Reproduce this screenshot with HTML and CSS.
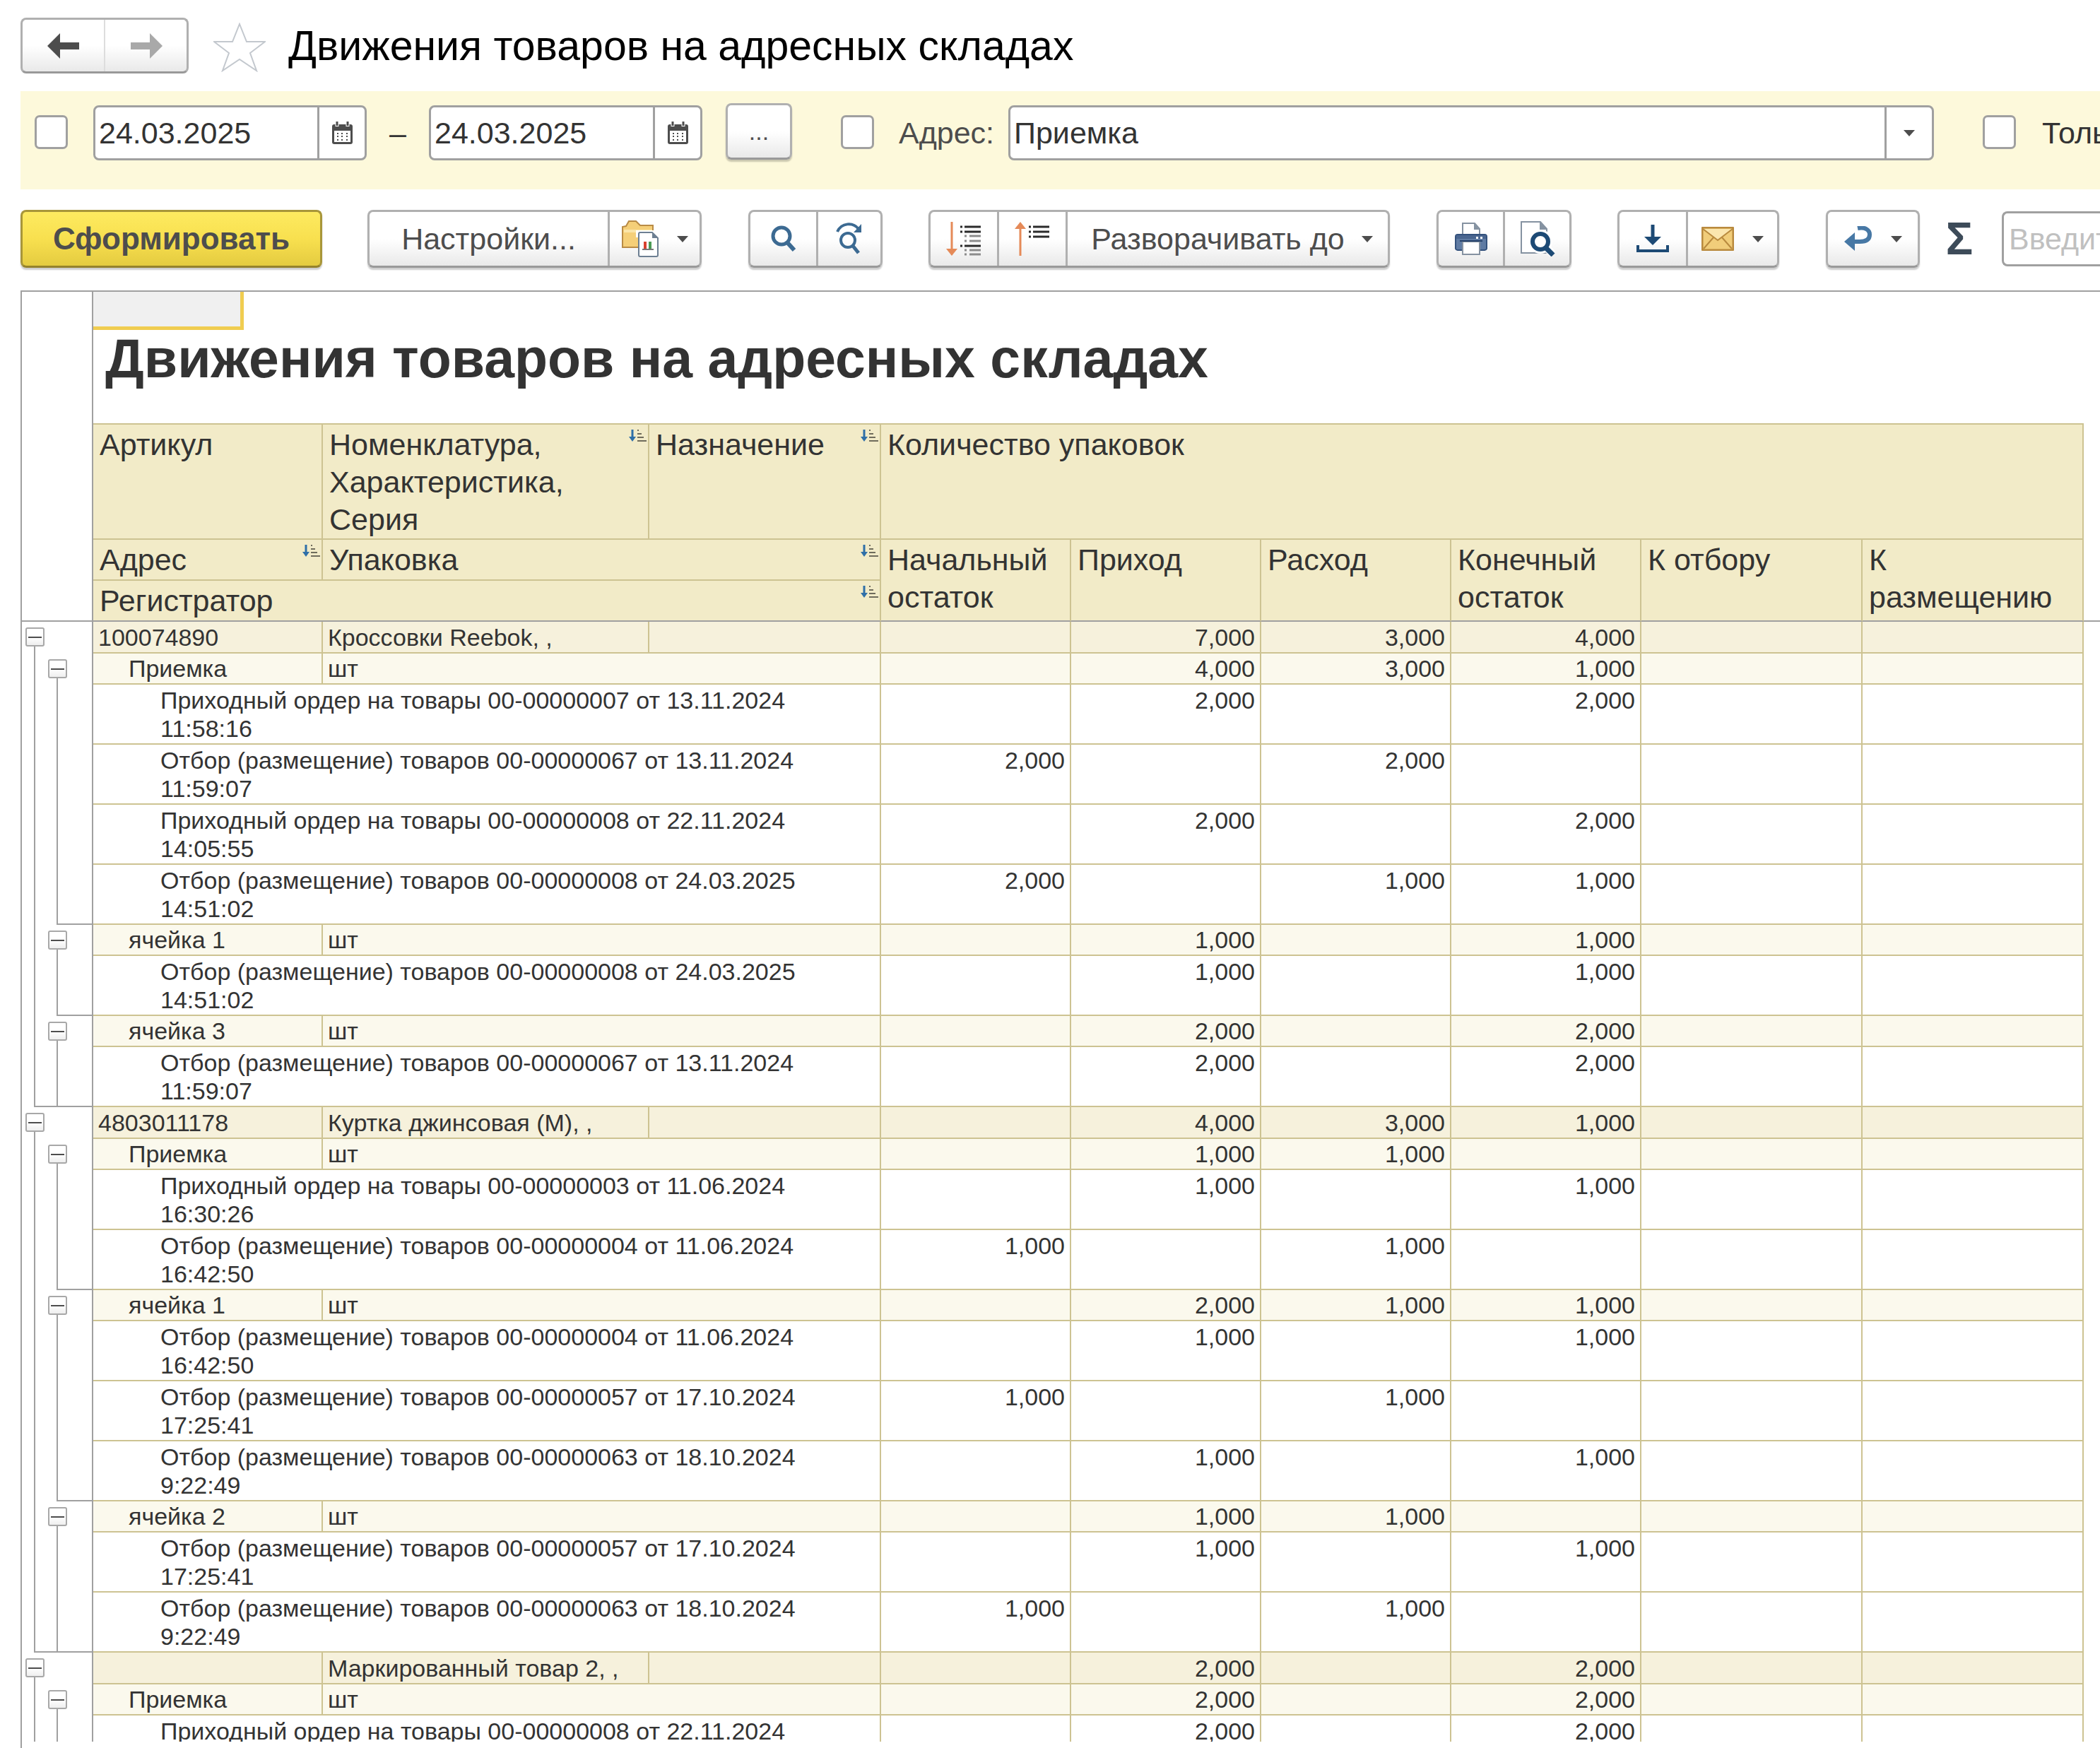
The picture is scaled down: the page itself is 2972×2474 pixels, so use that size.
FILE: index.html
```html
<!DOCTYPE html>
<html lang="ru">
<head>
    <meta charset="UTF-8">
    <meta name="viewport" content="width=device-width, initial-scale=1.0">
    <title>Движения товаров на адресных складах</title>
    <link rel="stylesheet" href="styles.css">
</head>
<body>

<!-- Shared icons -->
<svg class="sprite" width="0" height="0" aria-hidden="true">
    <symbol id="calendar" viewBox="0 0 29 32">
        <path d="M3 4h23a3 3 0 0 1 3 3v22a3 3 0 0 1-3 3H3a3 3 0 0 1-3-3V7a3 3 0 0 1 3-3z" fill="#4d4d4d"/>
        <path d="M3 13h23v16H3z" fill="#fff"/>
        <path d="M7 0v7M22 0v7" stroke="#fff" stroke-width="5"/>
        <path d="M7 0v6M22 0v6" stroke="#4d4d4d" stroke-width="3"/>
        <path d="M7 16h2v2H7zM13 16h2v2h-2zM20 16h2v2h-2zM7 20h2v2H7zM13 20h2v2h-2zM20 20h2v2h-2zM7 25h2v2H7zM13 25h2v2h-2zM20 25h2v2h-2z" fill="#4d4d4d"/>
    </symbol>
    <symbol id="caret" viewBox="0 0 16 9">
        <path d="M0 0h16L8 9z" fill="#4d4d4d"/>
    </symbol>
    <symbol id="sort" viewBox="0 0 25 18">
        <path d="M5 1v12" stroke="#2f6fa8" stroke-width="3"/>
        <path d="M0 11h10L5 18z" fill="#2f6fa8"/>
        <path d="M12 2h2M12 7h6M12 12h9M12 17h13" stroke="#6f6c5c" stroke-width="2"/>
    </symbol>
</svg>

<header class="title-bar">
    <div class="btn-group nav-buttons">
        <button type="button" aria-label="Назад">
            <svg width="46" height="36" viewBox="0 0 46 36"><path d="M0 18L18 0v13h27v10H18v13z" fill="#4d4d4d"/></svg>
        </button>
        <button type="button" aria-label="Вперед">
            <svg width="46" height="36" viewBox="0 0 46 36"><path d="M46 18L28 0v13H1v10h27v13z" fill="#a9a9a9"/></svg>
        </button>
    </div>
    <svg class="star" width="74" height="70" viewBox="0 0 74 70">
        <path d="M37 2l10 25h26L52 43l9 25-24-16-24 16 9-25L1 27h26z" fill="#fff" stroke="#c3c8ce" stroke-width="2"/>
    </svg>
    <h1>Движения товаров на адресных складах</h1>
</header>

<section class="filters">
    <input type="checkbox" class="check" aria-label="Период">
    <div class="field date-field">
        <input type="text" value="24.03.2025" aria-label="Начало периода">
        <button type="button" aria-label="Выбрать дату"><svg width="29" height="32"><use href="#calendar"/></svg></button>
    </div>
    <span class="dash">–</span>
    <div class="field date-field">
        <input type="text" value="24.03.2025" aria-label="Конец периода">
        <button type="button" aria-label="Выбрать дату"><svg width="29" height="32"><use href="#calendar"/></svg></button>
    </div>
    <button type="button" class="btn more-btn">...</button>
    <input type="checkbox" class="check address-check" aria-label="Отбор по адресу">
    <label for="address" class="address-label">Адрес:</label>
    <div class="field address-field">
        <select id="address">
            <option>Приемка</option>
        </select>
        <span class="drop"><svg width="16" height="9"><use href="#caret"/></svg></span>
    </div>
    <input type="checkbox" class="check only-check" id="only">
    <label for="only" class="only-label">Только</label>
</section>

<div class="toolbar">
    <button type="button" class="btn primary">Сформировать</button>

    <div class="btn-group settings">
        <button type="button" class="settings-btn">Настройки...</button>
        <button type="button" class="with-caret" aria-label="Варианты отчета">
            <svg width="52" height="52" viewBox="0 0 52 52">
                <path d="M1 38V9l5-1 4-7h10l6 6h18v31z" fill="#f5cf78" stroke="#b98b45" stroke-width="2"/>
                <path d="M3 15h40" stroke="#fbe5a8" stroke-width="4"/>
                <path d="M20 14h26v10H20z" fill="#fff"/>
                <path d="M26 17h17l8 8v24a2 2 0 0 1-2 2H26a2 2 0 0 1-2-2V19a2 2 0 0 1 2-2z" fill="#fff" stroke="#6d7f92" stroke-width="2"/>
                <path d="M43 17v8h8z" fill="#6d7f92"/>
                <path d="M33 30v10" stroke="#d8412f" stroke-width="4"/>
                <path d="M40 30v10" stroke="#4a9a54" stroke-width="4"/>
                <path d="M29 41h16" stroke="#777" stroke-width="2"/>
            </svg>
            <svg width="16" height="9"><use href="#caret"/></svg>
        </button>
    </div>

    <div class="btn-group search">
        <button type="button" aria-label="Найти">
            <svg width="36" height="38" viewBox="0 0 36 38">
                <circle cx="15" cy="15" r="12" fill="none" stroke="#3c6a92" stroke-width="5"/>
                <path d="M23 24l10 11" stroke="#3c6a92" stroke-width="6"/>
            </svg>
        </button>
        <button type="button" aria-label="Найти далее">
            <svg width="38" height="46" viewBox="0 0 38 46">
                <path d="M2 13C8 0 24-1 32 9" fill="none" stroke="#3c6a92" stroke-width="4"/>
                <path d="M36 2v12H25z" fill="#3c6a92"/>
                <circle cx="17" cy="25" r="10" fill="none" stroke="#3c6a92" stroke-width="4"/>
                <path d="M24 33l8 10" stroke="#3c6a92" stroke-width="5"/>
            </svg>
        </button>
    </div>

    <div class="btn-group expand">
        <button type="button" aria-label="Развернуть все">
            <svg width="50" height="48" viewBox="0 0 50 48">
                <path d="M8 0v40" stroke="#e58a58" stroke-width="3"/>
                <path d="M0 38h16L8 48z" fill="#e58a58"/>
                <path d="M20 7h3M26 7h23M20 14h3M26 14h23M20 34h3M26 34h23" stroke="#2b2b2b" stroke-width="3"/>
                <path d="M26 20h3M33 20h16M26 27h3M33 27h16M26 40h3M33 40h16M26 46h3M33 46h16" stroke="#8c8c8c" stroke-width="3"/>
            </svg>
        </button>
        <button type="button" aria-label="Свернуть все">
            <svg width="50" height="48" viewBox="0 0 50 48">
                <path d="M8 8v40" stroke="#e58a58" stroke-width="3"/>
                <path d="M0 10h16L8 0z" fill="#e58a58"/>
                <path d="M20 7h3M26 7h23M20 14h3M26 14h23M20 21h3M26 21h23" stroke="#2b2b2b" stroke-width="3"/>
            </svg>
        </button>
        <button type="button" class="expand-to">Разворачивать до <svg width="16" height="9"><use href="#caret"/></svg></button>
    </div>

    <div class="btn-group print">
        <button type="button" aria-label="Печать">
            <svg width="46" height="46" viewBox="0 0 46 46">
                <path d="M11 20V1h17l7 8v11" fill="#fff" stroke="#8592a1" stroke-width="2"/>
                <path d="M27 1v9h8z" fill="#8592a1"/>
                <path d="M4 17h38a3 3 0 0 1 3 3v17a3 3 0 0 1-3 2H4a3 3 0 0 1-3-2V20a3 3 0 0 1 3-3z" fill="#5f7ba3" stroke="#34527d" stroke-width="2"/>
                <path d="M2 18h42v5H2z" fill="#4a6690"/>
                <path d="M30 20h3v3h-3zM36 20h3v3h-3z" fill="#fff"/>
                <path d="M11 27h24v18H11z" fill="#fff" stroke="#8592a1" stroke-width="2"/>
                <path d="M7 26h32" stroke="#27426b" stroke-width="2"/>
            </svg>
        </button>
        <button type="button" aria-label="Предварительный просмотр">
            <svg width="50" height="50" viewBox="0 0 50 50">
                <path d="M2 1h27l9 10v34H2z" fill="#fff" stroke="#8592a1" stroke-width="2"/>
                <path d="M28 1v11h11z" fill="#8592a1"/>
                <circle cx="29" cy="29" r="13" fill="#fff" stroke="#fff" stroke-width="8"/>
                <path d="M36 36l11 11" stroke="#fff" stroke-width="11"/>
                <circle cx="29" cy="29" r="11" fill="#fff" stroke="#1d4a75" stroke-width="6"/>
                <path d="M37 38l10 10" stroke="#1d4a75" stroke-width="7"/>
            </svg>
        </button>
    </div>

    <div class="btn-group save">
        <button type="button" aria-label="Сохранить">
            <svg width="46" height="40" viewBox="0 0 46 40">
                <path d="M23 0v20" stroke="#1d4a75" stroke-width="5"/>
                <path d="M11 17h24L23 29z" fill="#1d4a75"/>
                <path d="M2 29v8h42v-8" fill="none" stroke="#1d4a75" stroke-width="4"/>
            </svg>
        </button>
        <button type="button" class="with-caret" aria-label="Отправить по почте">
            <svg width="46" height="34" viewBox="0 0 46 34">
                <rect x="1" y="1" width="44" height="32" rx="2" fill="#f1cd7a" stroke="#b98a3e" stroke-width="3"/>
                <path d="M3 3h40L23 19z" fill="#fbe6ae"/>
                <path d="M2 3l21 16L44 3M3 31l14-16M43 31L29 15" fill="none" stroke="#b98a3e" stroke-width="2"/>
            </svg>
            <svg width="16" height="9"><use href="#caret"/></svg>
        </button>
    </div>

    <div class="btn-group back">
        <button type="button" class="with-caret" aria-label="Вернуться">
            <svg width="40" height="36" viewBox="0 0 40 36">
                <path d="M19 3c10-2 17 2 17 9s-5 10-14 10h-9" fill="none" stroke="#4778a5" stroke-width="6"/>
                <path d="M0 22L15 9v26z" fill="#4778a5"/>
            </svg>
            <svg width="16" height="9"><use href="#caret"/></svg>
        </button>
    </div>

    <button type="button" class="sum-btn" aria-label="Сумма">Σ</button>
    <input type="text" class="find-input" placeholder="Введите" aria-label="Поиск">
</div>

<main class="report">
<div class="sheet">
<table>
    <colgroup>
        <col class="c-tree"><col class="c-code"><col class="c-item"><col class="c-purpose">
        <col class="c-num"><col class="c-num"><col class="c-num"><col class="c-num">
        <col class="c-pick"><col class="c-pick"><col>
    </colgroup>
    <thead>
        <tr class="caption">
            <td class="tree"></td>
            <td colspan="9">
                <div class="active-cell"></div>
                <h2>Движения товаров на адресных складах</h2>
            </td>
            <td class="rest"></td>
        </tr>
        <tr>
            <td class="tree freeze" rowspan="3"></td>
            <th>Артикул</th>
            <th><svg class="sort" width="25" height="18"><use href="#sort"/></svg>Номенклатура,<br>Характеристика,<br>Серия</th>
            <th><svg class="sort" width="25" height="18"><use href="#sort"/></svg>Назначение</th>
            <th colspan="6">Количество упаковок</th>
            <td class="rest freeze" rowspan="3"></td>
        </tr>
        <tr>
            <th><svg class="sort" width="25" height="18"><use href="#sort"/></svg>Адрес</th>
            <th colspan="2"><svg class="sort" width="25" height="18"><use href="#sort"/></svg>Упаковка</th>
            <th class="freeze" rowspan="2">Начальный остаток</th>
            <th class="freeze" rowspan="2">Приход</th>
            <th class="freeze" rowspan="2">Расход</th>
            <th class="freeze" rowspan="2">Конечный остаток</th>
            <th class="freeze" rowspan="2">К отбору</th>
            <th class="freeze" rowspan="2">К<br>размещению</th>
        </tr>
        <tr>
            <th class="freeze" colspan="3"><svg class="sort" width="25" height="18"><use href="#sort"/></svg>Регистратор</th>
        </tr>
    </thead>
    <tbody>
        <!-- Кроссовки Reebok -->
        <tr class="group"><td class="tree"><button type="button" class="toggle" aria-label="Свернуть"></button></td><td>100074890</td><td>Кроссовки Reebok, ,</td><td></td><td></td><td>7,000</td><td>3,000</td><td>4,000</td><td></td><td></td></tr>
        <tr class="sub"><td class="tree"><button type="button" class="toggle" aria-label="Свернуть"></button></td><td>Приемка</td><td colspan="2">шт</td><td></td><td>4,000</td><td>3,000</td><td>1,000</td><td></td><td></td></tr>
        <tr class="doc"><td class="tree"></td><td colspan="3">Приходный ордер на товары 00-00000007 от 13.11.2024<br>11:58:16</td><td></td><td>2,000</td><td></td><td>2,000</td><td></td><td></td></tr>
        <tr class="doc"><td class="tree"></td><td colspan="3">Отбор (размещение) товаров 00-00000067 от 13.11.2024<br>11:59:07</td><td>2,000</td><td></td><td>2,000</td><td></td><td></td><td></td></tr>
        <tr class="doc"><td class="tree"></td><td colspan="3">Приходный ордер на товары 00-00000008 от 22.11.2024<br>14:05:55</td><td></td><td>2,000</td><td></td><td>2,000</td><td></td><td></td></tr>
        <tr class="doc last"><td class="tree"></td><td colspan="3">Отбор (размещение) товаров 00-00000008 от 24.03.2025<br>14:51:02</td><td>2,000</td><td></td><td>1,000</td><td>1,000</td><td></td><td></td></tr>
        <tr class="sub"><td class="tree"><button type="button" class="toggle" aria-label="Свернуть"></button></td><td>ячейка 1</td><td colspan="2">шт</td><td></td><td>1,000</td><td></td><td>1,000</td><td></td><td></td></tr>
        <tr class="doc last"><td class="tree"></td><td colspan="3">Отбор (размещение) товаров 00-00000008 от 24.03.2025<br>14:51:02</td><td></td><td>1,000</td><td></td><td>1,000</td><td></td><td></td></tr>
        <tr class="sub"><td class="tree"><button type="button" class="toggle" aria-label="Свернуть"></button></td><td>ячейка 3</td><td colspan="2">шт</td><td></td><td>2,000</td><td></td><td>2,000</td><td></td><td></td></tr>
        <tr class="doc last-all"><td class="tree"></td><td colspan="3">Отбор (размещение) товаров 00-00000067 от 13.11.2024<br>11:59:07</td><td></td><td>2,000</td><td></td><td>2,000</td><td></td><td></td></tr>

        <!-- Куртка джинсовая -->
        <tr class="group"><td class="tree"><button type="button" class="toggle" aria-label="Свернуть"></button></td><td>4803011178</td><td>Куртка джинсовая (M), ,</td><td></td><td></td><td>4,000</td><td>3,000</td><td>1,000</td><td></td><td></td></tr>
        <tr class="sub"><td class="tree"><button type="button" class="toggle" aria-label="Свернуть"></button></td><td>Приемка</td><td colspan="2">шт</td><td></td><td>1,000</td><td>1,000</td><td></td><td></td><td></td></tr>
        <tr class="doc"><td class="tree"></td><td colspan="3">Приходный ордер на товары 00-00000003 от 11.06.2024<br>16:30:26</td><td></td><td>1,000</td><td></td><td>1,000</td><td></td><td></td></tr>
        <tr class="doc last"><td class="tree"></td><td colspan="3">Отбор (размещение) товаров 00-00000004 от 11.06.2024<br>16:42:50</td><td>1,000</td><td></td><td>1,000</td><td></td><td></td><td></td></tr>
        <tr class="sub"><td class="tree"><button type="button" class="toggle" aria-label="Свернуть"></button></td><td>ячейка 1</td><td colspan="2">шт</td><td></td><td>2,000</td><td>1,000</td><td>1,000</td><td></td><td></td></tr>
        <tr class="doc"><td class="tree"></td><td colspan="3">Отбор (размещение) товаров 00-00000004 от 11.06.2024<br>16:42:50</td><td></td><td>1,000</td><td></td><td>1,000</td><td></td><td></td></tr>
        <tr class="doc"><td class="tree"></td><td colspan="3">Отбор (размещение) товаров 00-00000057 от 17.10.2024<br>17:25:41</td><td>1,000</td><td></td><td>1,000</td><td></td><td></td><td></td></tr>
        <tr class="doc last"><td class="tree"></td><td colspan="3">Отбор (размещение) товаров 00-00000063 от 18.10.2024<br>9:22:49</td><td></td><td>1,000</td><td></td><td>1,000</td><td></td><td></td></tr>
        <tr class="sub"><td class="tree"><button type="button" class="toggle" aria-label="Свернуть"></button></td><td>ячейка 2</td><td colspan="2">шт</td><td></td><td>1,000</td><td>1,000</td><td></td><td></td><td></td></tr>
        <tr class="doc"><td class="tree"></td><td colspan="3">Отбор (размещение) товаров 00-00000057 от 17.10.2024<br>17:25:41</td><td></td><td>1,000</td><td></td><td>1,000</td><td></td><td></td></tr>
        <tr class="doc last-all"><td class="tree"></td><td colspan="3">Отбор (размещение) товаров 00-00000063 от 18.10.2024<br>9:22:49</td><td>1,000</td><td></td><td>1,000</td><td></td><td></td><td></td></tr>

        <!-- Маркированный товар -->
        <tr class="group"><td class="tree"><button type="button" class="toggle" aria-label="Свернуть"></button></td><td></td><td>Маркированный товар 2, ,</td><td></td><td></td><td>2,000</td><td></td><td>2,000</td><td></td><td></td></tr>
        <tr class="sub"><td class="tree"><button type="button" class="toggle" aria-label="Свернуть"></button></td><td>Приемка</td><td colspan="2">шт</td><td></td><td>2,000</td><td></td><td>2,000</td><td></td><td></td></tr>
        <tr class="doc"><td class="tree"></td><td colspan="3">Приходный ордер на товары 00-00000008 от 22.11.2024</td><td></td><td>2,000</td><td></td><td>2,000</td><td></td><td></td></tr>
    </tbody>
</table>
</div>
</main>

</body>
</html>
```
FILE: styles.css
```css
* {
    box-sizing: border-box;
}

body {
    font-family: "Liberation Sans", Arial, sans-serif;
    font-size: 43px;
    color: #333;
    margin: 0;
    padding: 25px 0 0 29px;
    height: 100vh;
    overflow: hidden;
    background: #fff;
    display: flex;
    flex-direction: column;
}

button, input, select {
    font: inherit;
    color: inherit;
    margin: 0;
    padding: 0;
}

button {
    cursor: pointer;
}

svg {
    display: block;
    flex: none;
}

.sprite {
    position: absolute;
}

/* Title */
.title-bar {
    display: flex;
    align-items: center;
    height: 79px;
    margin-bottom: 25px;
    flex: none;
}

.title-bar h1 {
    margin: 0;
    font-size: 59px;
    font-weight: normal;
    color: #000;
    white-space: nowrap;
}

.star {
    margin: 4px 32px 0 35px;
}

/* Buttons */
.btn,
.btn-group {
    height: 82px;
    border: 3px solid #b0b0b0;
    border-bottom-color: #999;
    border-radius: 8px;
    background: linear-gradient(#fff 50%, #e9e9e9);
    box-shadow: 0 3px 2px rgba(0, 0, 0, 0.2);
    color: #4d4d4d;
    flex: none;
}

.btn-group {
    display: flex;
}

.btn-group button {
    flex: 1;
    border: none;
    background: none;
    display: flex;
    align-items: center;
    justify-content: center;
    white-space: nowrap;
}

.btn-group button + button {
    border-left: 3px solid #b0b0b0;
}

.btn-group .with-caret {
    gap: 26px;
}

.nav-buttons {
    width: 238px;
    height: 79px;
    box-shadow: none;
}

.nav-buttons button + button {
    border-left: 2px solid #ddd;
}

/* Filters */
.filters {
    display: flex;
    align-items: flex-start;
    height: 139px;
    padding: 20px 0 0 20px;
    background: #fdf9db;
    margin-bottom: 29px;
    overflow: hidden;
    flex: none;
}

.check {
    appearance: none;
    width: 47px;
    height: 48px;
    margin-top: 14px;
    border: 3px solid #a0a0a0;
    border-radius: 7px;
    background: #fff;
    flex: none;
}

.field {
    display: flex;
    height: 78px;
    border: 3px solid #a0a0a0;
    border-radius: 8px;
    background: #fff;
    overflow: hidden;
}

.field input,
.field select {
    flex: 1;
    min-width: 0;
    appearance: none;
    border: none;
    background: none;
    padding-left: 5px;
}

.field button,
.field .drop {
    width: 67px;
    border: none;
    border-left: 3px solid #a0a0a0;
    background: none;
    display: flex;
    align-items: center;
    justify-content: center;
    flex: none;
}

.date-field {
    width: 387px;
    flex: none;
}

.check + .date-field {
    margin-left: 36px;
}

.dash {
    width: 88px;
    line-height: 78px;
    text-align: center;
    flex: none;
}

.more-btn {
    width: 94px;
    height: 80px;
    margin-top: -3px;
    margin-left: 33px;
    font-size: 34px;
}

.address-check {
    margin-left: 69px;
}

.address-label {
    margin-left: 35px;
    line-height: 78px;
    color: #4d4d4d;
}

.address-field {
    flex: 1;
    margin-left: 20px;
}

.only-check {
    margin-left: 69px;
}

.only-label {
    width: 82px;
    margin-left: 37px;
    line-height: 78px;
    overflow: hidden;
    flex: none;
}

/* Toolbar */
.toolbar {
    display: flex;
    align-items: center;
    height: 82px;
    margin-bottom: 32px;
    flex: none;
}

.primary {
    width: 427px;
    font-size: 44px;
    font-weight: bold;
    border-color: #a8963a;
    border-bottom-color: #94822c;
    background: linear-gradient(#fdea60, #f8e04f 50%, #e4cb40);
}

.settings {
    width: 473px;
    margin-left: 64px;
}

.settings .settings-btn {
    flex: none;
    width: 337px;
}

.search {
    width: 190px;
    margin-left: 66px;
}

.search button:first-child {
    flex: none;
    width: 93px;
}

.expand {
    width: 653px;
    margin-left: 65px;
}

.expand button {
    flex: none;
    width: 94px;
}

.expand button + button {
    width: 97px;
}

.expand .expand-to {
    flex: 1;
    gap: 24px;
    padding-left: 12px;
}

.print {
    width: 191px;
    margin-left: 66px;
}

.save {
    width: 229px;
    margin-left: 65px;
}

.save button:first-child {
    flex: none;
    width: 94px;
}

.back {
    width: 133px;
    margin-left: 66px;
}

.sum-btn {
    width: 60px;
    margin: 0 30px 0 26px;
    border: none;
    background: none;
    font-size: 64px;
    font-weight: bold;
    color: #3d4b59;
    flex: none;
}

/* runs off the right side of the toolbar */
.find-input {
    flex: 1;
    min-width: 0;
    height: 78px;
    padding-left: 7px;
    border: 3px solid #a0a0a0;
    border-right: none;
    border-radius: 8px 0 0 8px;
}

.find-input::placeholder {
    color: #c0c0c0;
}

/* Report */
.report {
    flex: 1;
    min-height: 0;
    display: flex;
    border-top: 2px solid #a0a0a0;
    border-left: 2px solid #a0a0a0;
    padding-bottom: 9px;
}

.sheet {
    flex: 1;
    overflow: hidden;
}

table {
    width: 100%;
    table-layout: fixed;
    border-collapse: separate;
    border-spacing: 0;
}

.c-tree { width: 101px; }
.c-code { width: 325px; }
.c-item { width: 462px; }
.c-purpose { width: 328px; }
.c-num { width: 269px; }
.c-pick { width: 313px; }

th, td {
    padding: 0;
    vertical-align: top;
    text-align: left;
    font-weight: normal;
    border-right: 2px solid #cdc392;
    border-bottom: 2px solid #cdc392;
}

th {
    height: 58px;
    padding: 2px 0 0 9px;
    line-height: 53px;
    background: #f2ebc8;
}

thead .freeze {
    border-bottom-color: #a0a0a0;
}

.rest {
    border: none;
}

.rest.freeze {
    border-bottom: 2px solid #a0a0a0;
}

.sort {
    float: right;
    margin: 4px 2px 0 0;
}

.caption td {
    height: 188px;
    border-right: none;
}

.active-cell {
    width: 213px;
    height: 54px;
    background: #f0f0f0;
    border-right: 5px solid #f0cd50;
    border-bottom: 5px solid #f0cd50;
}

.caption h2 {
    margin: 0 0 0 17px;
    font-size: 77px;
    line-height: 80px;
    white-space: nowrap;
}

/* Rows */
tbody td {
    height: 45px;
    padding: 2px 7px 1px;
    font-size: 34px;
    line-height: 40px;
}

tbody td:nth-last-child(-n+6) {
    text-align: right;
}

.group td {
    background: #f6f1dc;
}

.group td:nth-child(4) {
    text-align: left;
}

.sub td {
    height: 44px;
    padding-top: 1px;
    background: #fbf9ed;
}

.sub td:nth-child(2) {
    padding-left: 50px;
}

.doc td:nth-child(2) {
    padding-left: 95px;
}

/* Grouping tree on the left */
td.tree,
.caption td.tree {
    padding: 0;
    border-right: 2px solid #a0a0a0;
    border-bottom: none;
    background: #fff no-repeat;
}

td.tree.freeze {
    border-bottom: 2px solid #a0a0a0;
}

.group td.tree {
    background-image: linear-gradient(#a0a0a0, #a0a0a0);
    background-size: 2px 50%;
    background-position: 17px 100%;
}

.sub td.tree {
    background-image: linear-gradient(#a0a0a0, #a0a0a0), linear-gradient(#a0a0a0, #a0a0a0);
    background-size: 2px 100%, 2px 50%;
    background-position: 17px 0, 49px 100%;
}

.doc td.tree {
    background-image: linear-gradient(#a0a0a0, #a0a0a0), linear-gradient(#a0a0a0, #a0a0a0), linear-gradient(#a0a0a0, #a0a0a0);
    background-size: 2px 100%, 2px 100%, 0 0;
    background-position: 17px 0, 49px 0, 0 0;
}

.doc.last td.tree {
    background-size: 2px 100%, 2px 100%, 50px 2px;
    background-position: 17px 0, 49px 0, 49px 100%;
}

.doc.last-all td.tree {
    background-size: 2px 100%, 2px 100%, 82px 2px;
    background-position: 17px 0, 49px 0, 17px 100%;
}

.toggle {
    display: flex;
    align-items: center;
    justify-content: center;
    width: 27px;
    height: 27px;
    margin: 8px 0 0 5px;
    border: 2px solid #a8a8a8;
    border-radius: 3px;
    background: linear-gradient(#fff 50%, #eee);
}

.toggle::before {
    content: "";
    width: 19px;
    height: 2px;
    background: #4d4d4d;
}

.sub .toggle {
    margin-left: 37px;
}
```
